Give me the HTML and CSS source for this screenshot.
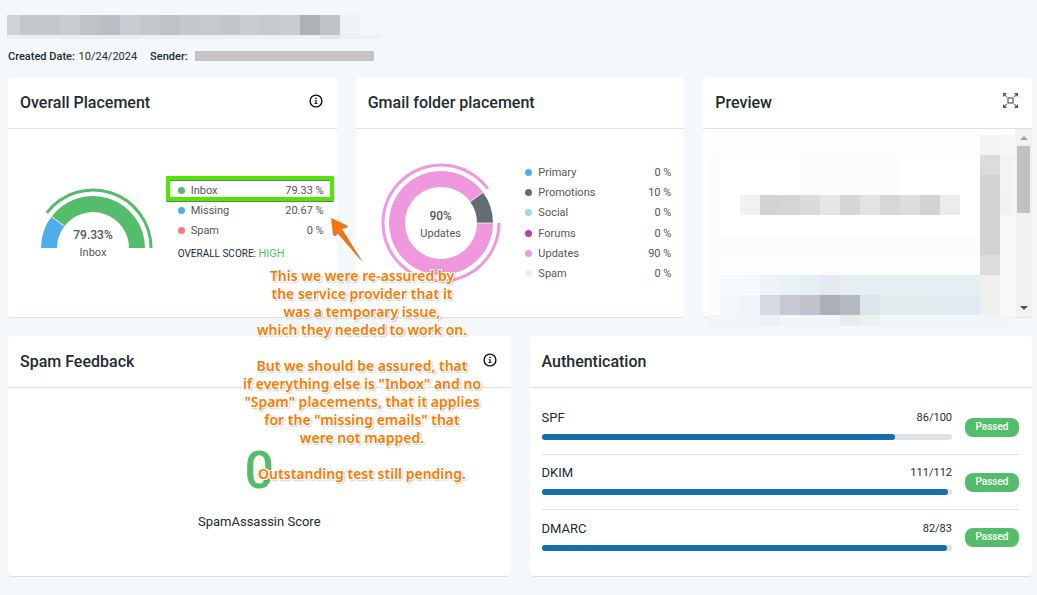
FILE: index.html
```html
<!DOCTYPE html>
<html lang="en">
<head>
    <meta charset="UTF-8">
    <meta name="viewport" content="width=device-width, initial-scale=1.0">
    <title>Inbox Placement Report</title>
    <link rel="stylesheet" href="styles.css">
</head>
<body>

    <header class="page-header">
        <!-- redacted test name -->
        <svg class="redacted-title" width="374" height="24" viewBox="7 15 374 24" shape-rendering="crispEdges" aria-hidden="true">
            <rect x="7" y="15" width="13" height="20" fill="#d0d4d7"/>
            <rect x="20" y="15" width="20" height="20" fill="#c4c8cb"/>
            <rect x="40" y="15" width="20" height="20" fill="#c3c8cc"/>
            <rect x="60" y="15" width="20" height="20" fill="#cacdd0"/>
            <rect x="80" y="15" width="20" height="20" fill="#bfc3c6"/>
            <rect x="100" y="15" width="20" height="20" fill="#bbbfc4"/>
            <rect x="120" y="15" width="20" height="20" fill="#c9ccd2"/>
            <rect x="140" y="15" width="20" height="20" fill="#c4c8cb"/>
            <rect x="160" y="15" width="20" height="20" fill="#bfc3c6"/>
            <rect x="180" y="15" width="20" height="20" fill="#c5c9cc"/>
            <rect x="200" y="15" width="20" height="20" fill="#c5cacf"/>
            <rect x="220" y="15" width="20" height="20" fill="#c2c6c9"/>
            <rect x="240" y="15" width="20" height="20" fill="#c9cdd0"/>
            <rect x="260" y="15" width="20" height="20" fill="#c5cace"/>
            <rect x="280" y="15" width="20" height="20" fill="#cacdd0"/>
            <rect x="300" y="15" width="20" height="20" fill="#aeb2b5"/>
            <rect x="320" y="15" width="20" height="20" fill="#bfc4c8"/>
            <rect x="340" y="15" width="20" height="20" fill="#edf2f5"/>
            <rect x="7" y="35" width="133" height="4" fill="#ebeff2"/>
            <rect x="140" y="35" width="180" height="4" fill="#eef1f4"/>
            <rect x="320" y="35" width="20" height="4" fill="#e3e7ea"/>
            <rect x="340" y="35" width="40" height="4" fill="#eef1f3"/>
        </svg>
        <div class="meta">
            <span><b>Created Date:</b> 10/24/2024</span>
            <span><b>Sender:</b></span>
            <span class="redacted-sender"></span>
        </div>
    </header>

    <main class="dashboard">
        <div class="row">
            <section class="card">
                <div class="card-header">
                    <h2>Overall Placement</h2>
                    <button class="icon-btn" aria-label="About overall placement">
                        <svg width="14" height="14" viewBox="0 0 14 14">
                            <circle cx="7" cy="7" r="5.9" fill="none" stroke="#111" stroke-width="1.4"/>
                            <path d="M6.2 3.8h1.6v1.2H6.2zM5.6 6.2h2.1v3h.8v.9H5.3v-.9h1.1V7h-.8z" fill="#111"/>
                        </svg>
                    </button>
                </div>
                <div class="card-body placement">
                    <div class="chart">
                        <svg width="122" height="122" viewBox="-61 -61 122 122" fill="none">
                            <path d="M-44 0A44 44 0 0 1 -35 -26.6" stroke="#4eaeea" stroke-width="16"/>
                            <path d="M-35 -26.6A44 44 0 0 1 44 0" stroke="#54bd6b" stroke-width="16"/>
                            <path d="M-28.6 -21.8L-41.6 -31.6" stroke="#fff" stroke-width="1"/>
                            <path d="M-46.2 -35.1A58 58 0 0 1 58 0" stroke="#54bd6b" stroke-width="3"/>
                        </svg>
                        <div class="chart-label half"><b>79.33%</b><span>Inbox</span></div>
                    </div>
                    <div class="legend-box">
                        <ul class="legend">
                            <li class="highlighted"><i class="dot green"></i>Inbox<span>79.33 %</span></li>
                            <li><i class="dot blue"></i>Missing<span>20.67 %</span></li>
                            <li><i class="dot red"></i>Spam<span>0 %</span></li>
                        </ul>
                        <p class="overall-score">OVERALL SCORE: <span>HIGH</span></p>
                    </div>
                </div>
            </section>

            <section class="card">
                <div class="card-header">
                    <h2>Gmail folder placement</h2>
                </div>
                <div class="card-body gmail">
                    <div class="chart">
                        <svg width="122" height="122" viewBox="-61 -61 122 122" fill="none">
                            <path d="M44 0A44 44 0 1 1 35.6 -25.9" stroke="#f098dd" stroke-width="16"/>
                            <path d="M35.6 -25.9A44 44 0 0 1 44 0" stroke="#636e73" stroke-width="16"/>
                            <path d="M35.5 0H52.5M28.7 -20.9L42.5 -30.9" stroke="#fff" stroke-width=".7"/>
                            <path d="M58 0A58 58 0 1 1 46.9 -34.1" stroke="#f098dd" stroke-width="3"/>
                        </svg>
                        <div class="chart-label"><b>90%</b><span>Updates</span></div>
                    </div>
                    <ul class="legend">
                        <li><i class="dot blue"></i>Primary<span>0 %</span></li>
                        <li><i class="dot gray"></i>Promotions<span>10 %</span></li>
                        <li><i class="dot sky"></i>Social<span>0 %</span></li>
                        <li><i class="dot purple"></i>Forums<span>0 %</span></li>
                        <li><i class="dot pink"></i>Updates<span>90 %</span></li>
                        <li><i class="dot light"></i>Spam<span>0 %</span></li>
                    </ul>
                </div>
            </section>

            <section class="card">
                <div class="card-header">
                    <h2>Preview</h2>
                    <button class="icon-btn" aria-label="Expand preview">
                        <svg width="15" height="15" viewBox="0 0 15 15" fill="none" stroke="#666" stroke-width="1.3">
                            <rect x="5" y="5" width="5" height="5"/>
                            <path d="M3.8 3.8L1 1M11.2 3.8L14 1M3.8 11.2L1 14M11.2 11.2L14 14" stroke-width="1.1"/>
                            <path d="M0 0h4L0 4zM15 0v4L11 0zM0 15v-4l4 4zM15 15h-4l4-4z" fill="#555" stroke="none"/>
                        </svg>
                    </button>
                </div>
                <div class="card-body preview">
                    <!-- pixelated email preview -->
                    <svg class="mosaic" width="312" height="188" viewBox="703 129 312 188" shape-rendering="crispEdges" aria-hidden="true">
                        <rect x="708" y="131" width="272" height="24" fill="#fcfefd"/>
                        <rect x="708" y="155" width="12" height="160" fill="#fbfdfd"/>
                        <rect x="800" y="155" width="100" height="40" fill="#fcfcfc"/>
                        <rect x="740" y="195" width="20" height="20" fill="#f1f1f1"/>
                        <rect x="760" y="195" width="20" height="20" fill="#d2d2d2"/>
                        <rect x="780" y="195" width="20" height="20" fill="#d5d5d5"/>
                        <rect x="800" y="195" width="20" height="20" fill="#dbdbdb"/>
                        <rect x="820" y="195" width="20" height="20" fill="#e6e6e6"/>
                        <rect x="840" y="195" width="20" height="20" fill="#d6d6d6"/>
                        <rect x="860" y="195" width="20" height="20" fill="#e3e3e3"/>
                        <rect x="880" y="195" width="20" height="20" fill="#d7d7d7"/>
                        <rect x="900" y="195" width="20" height="20" fill="#dddddd"/>
                        <rect x="920" y="195" width="20" height="20" fill="#d3d3d3"/>
                        <rect x="940" y="195" width="20" height="20" fill="#ececec"/>
                        <rect x="720" y="235" width="260" height="20" fill="#fcfcfc"/>
                        <rect x="720" y="255" width="260" height="20" fill="#fcfefe"/>
                        <rect x="720" y="275" width="20" height="20" fill="#f5fafe"/>
                        <rect x="740" y="275" width="20" height="20" fill="#f3f9fc"/>
                        <rect x="760" y="275" width="20" height="20" fill="#edf3f6"/>
                        <rect x="780" y="275" width="20" height="20" fill="#e9f2f6"/>
                        <rect x="800" y="275" width="20" height="20" fill="#e6eff3"/>
                        <rect x="820" y="275" width="20" height="20" fill="#e3eaf4"/>
                        <rect x="840" y="275" width="140" height="20" fill="#e5eef1"/>
                        <rect x="720" y="295" width="20" height="20" fill="#f2f8fb"/>
                        <rect x="740" y="295" width="20" height="20" fill="#eff6fa"/>
                        <rect x="760" y="295" width="20" height="20" fill="#d6dae1"/>
                        <rect x="780" y="295" width="20" height="20" fill="#c5c9d5"/>
                        <rect x="800" y="295" width="20" height="20" fill="#c1c2ce"/>
                        <rect x="820" y="295" width="20" height="20" fill="#afafbb"/>
                        <rect x="840" y="295" width="20" height="20" fill="#b4bac0"/>
                        <rect x="860" y="295" width="20" height="20" fill="#dae6e9"/>
                        <rect x="880" y="295" width="60" height="20" fill="#e2ebee"/>
                        <rect x="940" y="295" width="40" height="20" fill="#e2eaf2"/>
                        <rect x="980" y="135" width="20" height="20" fill="#f3f5f5"/>
                        <rect x="980" y="155" width="20" height="20" fill="#dcdcdc"/>
                        <rect x="980" y="175" width="20" height="80" fill="#d3d3d3"/>
                        <rect x="980" y="255" width="20" height="20" fill="#dcdcdc"/>
                        <rect x="980" y="275" width="20" height="40" fill="#eef0f0"/>
                        <rect x="1000" y="135" width="14" height="20" fill="#f6f8f8"/>
                        <rect x="1000" y="155" width="14" height="40" fill="#f1f4f3"/>
                        <rect x="1000" y="195" width="14" height="20" fill="#f2f2f2"/>
                        <rect x="1000" y="215" width="14" height="100" fill="#f8f8f8"/>
                        <rect x="709" y="315" width="305" height="11" fill="#f2f6f9"/>
                        <rect x="760" y="315" width="20" height="11" fill="#eceff3"/>
                        <rect x="840" y="315" width="20" height="11" fill="#eaebef"/>
                        <rect x="860" y="315" width="20" height="11" fill="#edf1f4"/>
                    </svg>
                    <div class="scrollbar">
                        <span class="arrow up"></span>
                        <span class="thumb"></span>
                        <span class="arrow down"></span>
                    </div>
                </div>
            </section>
        </div>

        <div class="row">
            <section class="card">
                <div class="card-header">
                    <h2>Spam Feedback</h2>
                    <button class="icon-btn" aria-label="About spam feedback">
                        <svg width="14" height="14" viewBox="0 0 14 14">
                            <circle cx="7" cy="7" r="5.9" fill="none" stroke="#111" stroke-width="1.4"/>
                            <path d="M6.2 3.8h1.6v1.2H6.2zM5.6 6.2h2.1v3h.8v.9H5.3v-.9h1.1V7h-.8z" fill="#111"/>
                        </svg>
                    </button>
                </div>
                <div class="card-body spam">
                    <div class="score">0</div>
                    <p>SpamAssassin Score</p>
                </div>
            </section>

            <section class="card">
                <div class="card-header">
                    <h2>Authentication</h2>
                </div>
                <div class="card-body auth">
                    <div class="auth-row">
                        <div class="auth-info">
                            <div class="auth-text">SPF<span>86/100</span></div>
                            <div class="bar"><div class="fill" style="width: 86%"></div></div>
                        </div>
                        <span class="badge">Passed</span>
                    </div>
                    <div class="auth-row">
                        <div class="auth-info">
                            <div class="auth-text">DKIM<span>111/112</span></div>
                            <div class="bar"><div class="fill" style="width: 99.1%"></div></div>
                        </div>
                        <span class="badge">Passed</span>
                    </div>
                    <div class="auth-row">
                        <div class="auth-info">
                            <div class="auth-text">DMARC<span>82/83</span></div>
                            <div class="bar"><div class="fill" style="width: 98.8%"></div></div>
                        </div>
                        <span class="badge">Passed</span>
                    </div>
                </div>
            </section>
        </div>
    </main>

    <!-- notes drawn over the report -->
    <svg class="note-arrow" width="40" height="52" viewBox="326 214 40 52" aria-hidden="true">
        <path d="M332 219L348 226L347 228L342 229L363 262L338 234L336 236L334 236Z" fill="#555" opacity=".6"/>
        <path d="M331 218L346 225L346 227L341 228L362 262L337 232L335 235L333 235Z" fill="#f97306"/>
    </svg>
    <div class="note">
        <p>This we were re-assured by<br>the service provider that it<br>was a temporary issue,<br>which they needed to work on.</p>
        <p>But we should be assured, that<br>if everything else is "Inbox" and no<br>"Spam" placements, that it applies<br>for the "missing emails" that<br>were not mapped.</p>
        <p>Outstanding test still pending.</p>
    </div>

</body>
</html>
```
FILE: styles.css
```css
* {
    box-sizing: border-box;
}
body {
    margin: 0;
    padding: 15px 5px 18px 8px;
    position: relative;
    background: #f4f8fb;
    font-family: Roboto, Arial, sans-serif;
    font-size: 11px;
    color: #212b33;
}
h2, p, ul {
    margin: 0;
    padding: 0;
}
.redacted-title {
    display: block;
    margin-left: -1px;
}
.meta {
    display: flex;
    align-items: center;
    gap: 13px;
    height: 16px;
    margin: 9px 0 13px;
}
.meta b {
    margin-right: 1px;
    font-weight: 500;
}
.redacted-sender {
    width: 179px;
    height: 10px;
    margin-left: -7px;
    background: #c3c3c3;
}
.dashboard {
    display: flex;
    flex-direction: column;
    gap: 18px;
}
.row {
    display: flex;
    gap: 19px;
}
.card {
    flex: 1;
    min-width: 0;
    min-height: 241px;
    display: flex;
    flex-direction: column;
    background: #fff;
    border-bottom: 1px solid #dce1e5;
    border-radius: 4px;
}
.card-header {
    display: flex;
    justify-content: space-between;
    align-items: center;
    height: 52px;
    padding: 0 14px 0 12px;
    border-bottom: 1px solid #dce1e5;
}
.card-header h2 {
    font-size: 16px;
    line-height: 20px;
    font-weight: 500;
}
.icon-btn {
    display: flex;
    padding: 0 0 4px;
    border: none;
    background: none;
    cursor: pointer;
}
.card-body {
    flex: 1;
    display: flex;
}

/* charts */
.chart {
    position: relative;
    display: flex;
}
.chart-label {
    position: absolute;
    inset: 0;
    display: flex;
    flex-direction: column;
    align-items: center;
    justify-content: center;
    padding-top: 3px;
    line-height: 17px;
    color: #555;
}
.chart-label.half {
    padding-top: 40px;
    justify-content: flex-start;
}
.chart-label b {
    font-size: 12px;
    font-weight: 500;
}
.placement {
    padding: 51px 13px 0 24px;
    justify-content: space-between;
    align-items: flex-start;
}
.placement .chart {
    margin-top: 7px;
}
.gmail {
    padding: 0 13px 0 24px;
    justify-content: space-between;
    align-items: center;
}
.legend {
    list-style: none;
    width: 146px;
    color: #555;
}
.legend li {
    display: flex;
    align-items: center;
    height: 20px;
}
.gmail .legend {
    display: flex;
    flex-direction: column;
    justify-content: space-between;
    height: 122px;
}
.legend span {
    margin-left: auto;
}
.dot {
    width: 7px;
    height: 7px;
    margin-right: 6px;
    border-radius: 50%;
}
.green { background: #54bd6b; }
.blue { background: #4eaeea; }
.red { background: #fb7b7b; }
.gray { background: #636e73; }
.sky { background: #9fd3f6; }
.purple { background: #bb3eb3; }
.pink { background: #f098dd; }
.light { background: #eceef0; }
.highlighted {
    position: relative;
}
.highlighted::before {
    content: "";
    position: absolute;
    inset: -4px -10px -1px -12px;
    border: 4px solid #52e600;
    border-radius: 1px;
    box-shadow: 0 1px 1px #666, inset 0 1px 1px #666;
}
.overall-score {
    margin-top: 7px;
    font-size: 10px;
    line-height: 14px;
}
.overall-score span {
    font-size: 11px;
    color: #54bd6b;
}

/* preview */
.preview {
    justify-content: space-between;
}
.mosaic {
    overflow: visible;
}
.scrollbar {
    display: flex;
    flex-direction: column;
    align-items: center;
    width: 17px;
    padding: 7px 0;
    background: #f1f1f1;
}
.thumb {
    width: 13px;
    height: 67px;
    margin: 6px 0 auto;
    background: #c1c1c1;
}
.arrow {
    border: 4px solid transparent;
}
.arrow.up {
    border-top: 0;
    border-bottom-color: #a3a3a3;
}
.arrow.down {
    border-bottom: 0;
    border-top-color: #505050;
}

/* spam feedback */
.spam {
    flex-direction: column;
    align-items: center;
    padding-top: 53px;
    font-size: 13px;
}
.score {
    font-size: 52px;
    line-height: 60px;
    font-weight: 500;
    color: #54bd6b;
}
.spam p {
    margin-top: 12px;
    line-height: 18px;
}

/* authentication */
.auth {
    flex-direction: column;
    padding: 12px 13px 0 12px;
}
.auth-row {
    display: flex;
    align-items: center;
    gap: 13px;
    height: 55px;
    border-bottom: 1px solid #dce1e5;
}
.auth-row:last-child {
    border-bottom: none;
}
.auth-info {
    flex: 1;
    padding-bottom: 4px;
}
.auth-text {
    display: flex;
    justify-content: space-between;
    margin-bottom: 8px;
    font-size: 13px;
    line-height: 16px;
}
.auth-text span {
    font-size: 11px;
}
.bar {
    height: 6px;
    background: #dde2e6;
    border-radius: 3px;
}
.fill {
    height: 6px;
    background: #146dad;
    border-radius: 3px;
}
.badge {
    width: 54px;
    height: 19px;
    background: #54bd6b;
    border-radius: 8px;
    color: #fff;
    font-size: 10px;
    line-height: 18px;
    font-weight: 500;
    text-align: center;
}

/* notes */
.note {
    position: absolute;
    top: 267px;
    left: 232px;
    width: 260px;
    font-family: "Noto Sans", sans-serif;
    font-size: 14px;
    line-height: 18px;
    font-weight: 600;
    text-align: center;
    color: #ff7800;
    text-shadow: -1px -1px 0 #fff, 0 -1px 0 #fff, 1px -1px 0 #fff, -1px 0 0 #fff, 1px 0 0 #fff, -1px 1px 0 #fff, 0 1px 0 #fff, 1px 1px 0 #fff, 1px 1px 2px #555;
}
.note p {
    margin-bottom: 18px;
}
.note-arrow {
    position: absolute;
    top: 214px;
    left: 326px;
}
```
